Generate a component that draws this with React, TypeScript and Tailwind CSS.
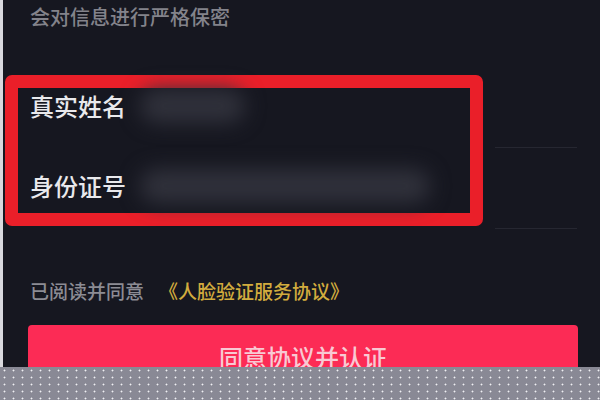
import React from "react";

const font = { fontFamily: '"Noto Sans CJK SC", "Noto Sans", sans-serif' };

const FieldRow: React.FC<{ label: string; blurWidth: string; className?: string }> = ({ label, blurWidth, className }) => (
    <div className={`flex items-center h-[36px] ${className ?? ""}`}>
        <span className="w-[110px] shrink-0 text-[24px] leading-[24px] font-medium text-[#e9e9ec]">{label}</span>
        <div className={`${blurWidth} h-[34px] rounded-full bg-[#30313b] blur-[10px]`} />
    </div>
);

export default function App() {
    return (
        <div className="w-[600px] h-[400px] bg-[#161720] flex flex-col overflow-hidden" style={font}>
            <div className="h-[367px] flex overflow-hidden">
                <div className="w-[3px] shrink-0 bg-[#d9d9de]" />
                <div className="flex-1 flex flex-col">
                    <p className="mt-[7px] ml-[27px] text-[20px] leading-[20px] font-medium text-[#83838b]">会对信息进行严格保密</p>

                    <div className="mt-[48px] flex items-start">
                        <div className="ml-[2px] w-[478px] h-[151px] shrink-0 border-[13px] border-[#ea1f29] rounded-[7px] flex flex-col pl-[12px]">
                            <FieldRow label="真实姓名" blurWidth="w-[105px]" />
                            <FieldRow label="身份证号" blurWidth="w-[290px]" className="mt-[48px] -translate-y-[4px]" />
                        </div>
                        <div className="ml-[12px] w-[82px] flex flex-col">
                            <div className="mt-[72px] h-px bg-[#262731]" />
                            <div className="mt-[80px] h-px bg-[#262731]" />
                        </div>
                    </div>

                    <p className="mt-[52px] ml-[27px] text-[19px] leading-[19px] font-medium text-[#8c8c94]">
                        已阅读并同意
                        <span className="ml-[15px] text-[#d2ac3e]">《人脸验证服务协议》</span>
                    </p>

                    <div className="mt-[25px] ml-[25px] w-[550px] h-[70px] shrink-0 rounded-[4px] bg-[#fc2b55] flex justify-center pt-[20px]">
                        <span className="text-[24px] leading-[24px] font-medium text-[#f8c9d3]">同意协议并认证</span>
                    </div>
                </div>
            </div>
            <div className="h-[33px] bg-[#898995] bg-[radial-gradient(circle,#f0f0f4_0.7px,transparent_1.2px)] bg-[length:9px_7px]" />
        </div>
    );
}
